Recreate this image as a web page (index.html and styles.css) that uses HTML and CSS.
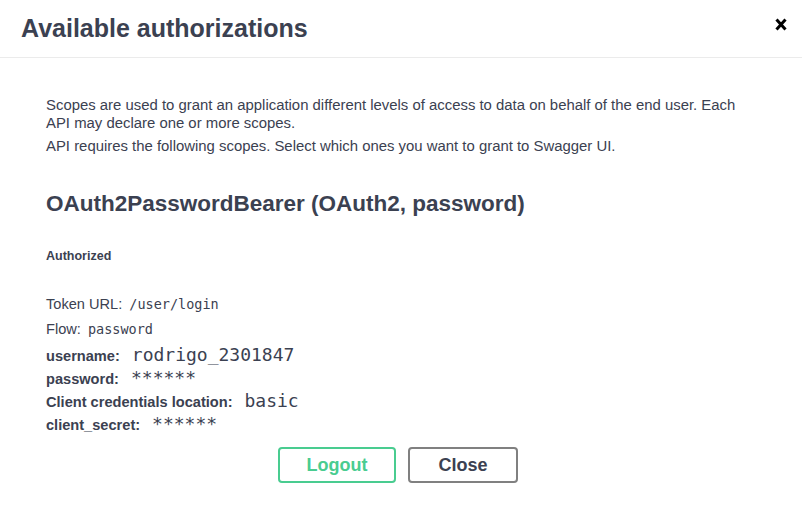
FILE: index.html
```html
<!DOCTYPE html>
<html>
<head>
<meta charset="utf-8">
<link rel="stylesheet" href="styles.css">
</head>
<body>
<div class="modal">
  <header class="modal-header">
    <h3 class="modal-title">Available authorizations</h3>
    <button class="close-x" aria-label="Close">
      <svg width="12" height="13" viewBox="0 0 12 13"><path d="M1.5 1.5 L10.5 11.5 M10.5 1.5 L1.5 11.5" stroke="#000" stroke-width="3" stroke-linecap="butt"/></svg>
    </button>
  </header>
  <div class="modal-body">
    <p class="desc">Scopes are used to grant an application different levels of access to data on behalf of the end user. Each API may declare one or more scopes.</p>
    <p class="desc desc2">API requires the following scopes. Select which ones you want to grant to Swagger UI.</p>
    <h4 class="scheme">OAuth2PasswordBearer (OAuth2, password)</h4>
    <h6 class="status">Authorized</h6>
    <p class="meta meta-token">Token URL: <code class="code-sm">/user/login</code></p>
    <p class="meta meta-flow">Flow: <code class="code-sm">password</code></p>
    <div class="fields">
      <div class="field"><label>username:</label><code class="code-lg">rodrigo_2301847</code></div>
      <div class="field"><label>password:</label><code class="code-lg">******</code></div>
      <div class="field"><label>Client credentials location:</label><code class="code-lg">basic</code></div>
      <div class="field"><label>client_secret:</label><code class="code-lg">******</code></div>
    </div>
    <div class="actions">
      <button class="btn btn-logout">Logout</button>
      <button class="btn btn-close">Close</button>
    </div>
  </div>
</div>
</body>
</html>
```
FILE: styles.css
```css
html, body {
  margin: 0;
  padding: 0;
  background: #fff;
}
body {
  font-family: "Liberation Sans", Arial, sans-serif;
  color: #3b4151;
}
.modal {
  width: 802px;
}
.modal-header {
  height: 58px;
  border-bottom: 1px solid #ebebeb;
  display: flex;
  align-items: center;
  justify-content: space-between;
  padding: 0 15px 0 21px;
  box-sizing: border-box;
}
.modal-title {
  margin: 0;
  font-size: 25px;
  font-weight: bold;
  color: #3b4151;
}
.close-x {
  border: 0;
  background: none;
  padding: 0;
  width: 12px;
  height: 13px;
  display: flex;
  align-self: flex-start;
  margin-top: 18px;
}
.modal-body {
  padding: 38px 46px 0 46px;
}
.desc {
  margin: 0;
  font-size: 14.9px;
  line-height: 18px;
}
.desc2 {
  margin-top: 5px;
}
.scheme {
  margin: 35px 0 0;
  font-size: 22.5px;
  font-weight: bold;
  line-height: 28px;
}
.status {
  margin: 30px 0 0;
  font-size: 12.5px;
  font-weight: bold;
  line-height: 16px;
}
.meta {
  margin: 0;
  font-size: 14.6px;
  line-height: 18px;
}
.meta-token {
  margin-top: 31px;
}
.meta-flow {
  margin-top: 7px;
}
.code-sm {
  font-family: "DejaVu Sans Mono", monospace;
  font-size: 13.5px;
  margin-left: 3px;
  line-height: 1;
}
.fields {
  margin-top: 7px;
}
.field {
  font-size: 14.6px;
  height: 23px;
  line-height: 23px;
  display: flex;
  align-items: baseline;
  gap: 12px;
}
.field label {
  font-weight: bold;
}
.code-lg {
  font-family: "DejaVu Sans Mono", monospace;
  font-size: 18px;
  line-height: 20px;
}
.actions {
  display: flex;
  justify-content: center;
  gap: 12px;
  margin-top: 10px;
  padding-right: 6px;
}
.btn {
  font-family: "Liberation Sans", Arial, sans-serif;
  font-size: 18px;
  font-weight: bold;
  height: 36px;
  border-radius: 4px;
  background: #fff;
  border: 2px solid;
  box-sizing: border-box;
  padding: 0;
}
.btn-logout {
  width: 118px;
  color: #49cc90;
  border-color: #49cc90;
}
.btn-close {
  width: 110px;
  color: #3b4151;
  border-color: #808080;
}
```
